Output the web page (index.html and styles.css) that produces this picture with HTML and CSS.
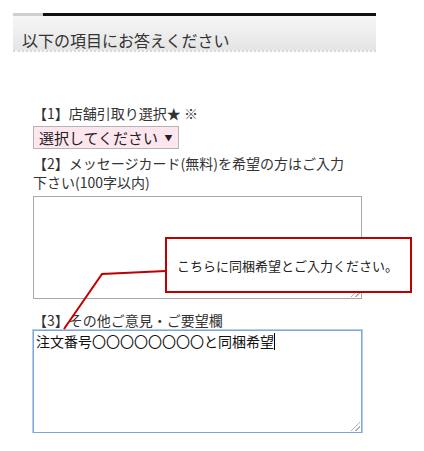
FILE: index.html
```html
<!DOCTYPE html>
<html lang="ja">
<head>
  <meta charset="UTF-8" />
  <meta name="viewport" content="width=device-width, initial-scale=1.0" />
  <title>以下の項目にお答えください</title>
  <link rel="stylesheet" href="styles.css">
</head>
<body>
  <div class="page">
    <!-- Section heading -->
    <div class="head-rule"></div>
    <h2 class="head">以下の項目にお答えください</h2>

    <div class="form">
      <div class="field field-1">
        <p class="label">【1】店舗引取り選択★ ※</p>
        <div class="select">選択してください <span class="arrow">▼</span></div>
      </div>

      <div class="field field-2">
        <p class="label">【2】メッセージカード(無料)を希望の方はご入力下さい(100字以内)</p>
        <div class="textarea"><span class="grip"></span></div>
      </div>

      <div class="field field-3">
        <p class="label">【3】その他ご意見・ご要望欄</p>
        <div class="textarea focus">注文番号〇〇〇〇〇〇〇〇と同梱希望<span class="caret"></span><span class="grip"></span></div>
      </div>

      <!-- Annotation callout over the form -->
      <svg class="pointer" width="120" height="70" viewBox="0 0 120 70">
        <polyline points="115,4 51,7 13,62" fill="none" stroke="#c00000" stroke-width="2" />
      </svg>
      <div class="callout">こちらに同梱希望とご入力ください。</div>
    </div>
  </div>
</body>
</html>
```

FILE: styles.css
```css
* {
  box-sizing: border-box;
}

body {
  margin: 0;
  background: #ffffff;
  color: #333333;
  font-family: "Noto Sans CJK JP", "Liberation Sans", sans-serif;
}

.page {
  padding: 13px 0 0 13px;
  width: 376px;
}

.head-rule {
  height: 3px;
  background: linear-gradient(to right, #cfcfcf 0, #cfcfcf 30px, #111111 30px);
}

.head {
  margin: 0;
  height: 36px;
  padding: 14px 0 0 9px;
  font-size: 16px;
  font-weight: normal;
  line-height: 20px;
  color: #333333;
  background: linear-gradient(to bottom, #f6f6f6, #ececec 60%, #e4e4e4);
  border-bottom: 2px dotted #d8d8d8;
}

.form {
  position: relative;
  margin: 52px 0 0 20px;
  width: 330px;
}

.label {
  margin: 0 0 4px;
  width: 318px;
  font-size: 14px;
  line-height: 19px;
  color: #333333;
}

.field-1 .label {
  margin-bottom: 2px;
}

.field-1 {
  margin-bottom: 5px;
}

.field-2 {
  margin-bottom: 12px;
}

.field-3 .label {
  margin-bottom: 0;
}

.select {
  display: inline-block;
  height: 23px;
  padding: 0 6px 0 5px;
  font-size: 15px;
  line-height: 21px;
  color: #222222;
  background: #fde6ee;
  border: 1px solid #b4b4b4;
}

.arrow {
  font-size: 8px;
  vertical-align: 3px;
  margin-left: 3px;
}

.textarea {
  position: relative;
  width: 329px;
  height: 103px;
  border: 1px solid #a9a9a9;
  background: #ffffff;
}

.textarea.focus {
  border: 1px solid #7fa6dc;
  box-shadow: 0 0 0 1px #b4ccee;
  padding: 1px 2px;
  font-size: 14px;
  line-height: 19px;
  color: #111111;
}

.caret {
  display: inline-block;
  width: 1px;
  height: 17px;
  background: #000000;
  vertical-align: -3px;
}

.grip {
  position: absolute;
  right: 1px;
  bottom: 1px;
  width: 9px;
  height: 9px;
  background: linear-gradient(135deg, transparent 45%, #b0b0b0 45%, #b0b0b0 55%, transparent 55%, transparent 72%, #b0b0b0 72%, #b0b0b0 82%, transparent 82%);
}

.pointer {
  position: absolute;
  left: 18px;
  top: 163px;
}

.callout {
  position: absolute;
  left: 132px;
  top: 133px;
  width: 247px;
  height: 56px;
  padding: 18px 0 0 10px;
  font-size: 13px;
  line-height: 18px;
  color: #222222;
  background: #ffffff;
  border: 2px solid #c00000;
}
```
